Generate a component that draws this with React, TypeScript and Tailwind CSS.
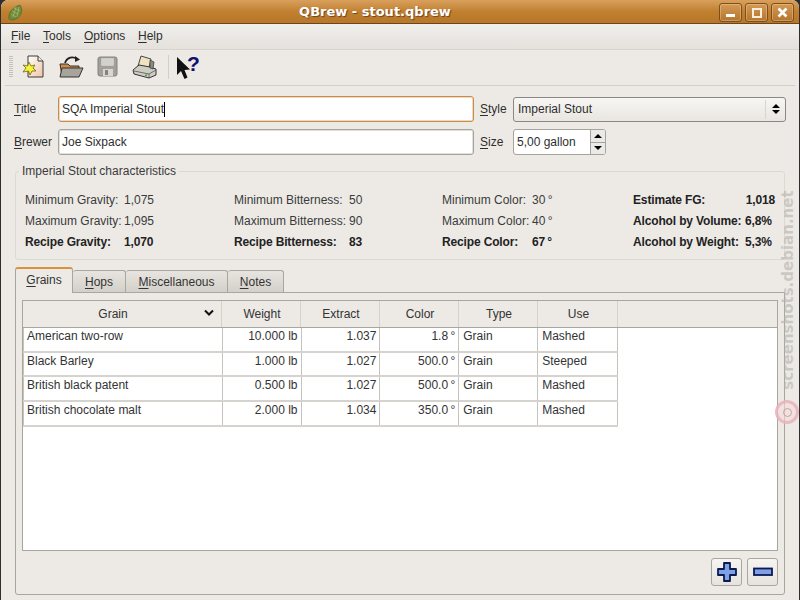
import type { ReactNode } from 'react';

const COLUMNS = [
  { label: 'Grain', width: 'w-[199px]' },
  { label: 'Weight', width: 'w-[79px]' },
  { label: 'Extract', width: 'w-[79px]' },
  { label: 'Color', width: 'w-[79px]' },
  { label: 'Type', width: 'w-[79px]' },
  { label: 'Use', width: 'w-[80px]' },
];

const GRAINS = [
  ['American two-row', '10.000 lb', '1.037', '1.8\u2009°', 'Grain', 'Mashed'],
  ['Black Barley', '1.000 lb', '1.027', '500.0\u2009°', 'Grain', 'Steeped'],
  ['British black patent', '0.500 lb', '1.027', '500.0\u2009°', 'Grain', 'Mashed'],
  ['British chocolate malt', '2.000 lb', '1.034', '350.0\u2009°', 'Grain', 'Mashed'],
];

const CHARACTERISTICS = [
  {
    width: 'w-[209px]',
    labelWidth: 'w-[99px]',
    rows: [
      ['Minimum Gravity:', '1,075'],
      ['Maximum Gravity:', '1,095'],
      ['Recipe Gravity:', '1,070'],
    ],
  },
  {
    width: 'w-[208px]',
    labelWidth: 'w-[115px]',
    rows: [
      ['Minimum Bitterness:', '50'],
      ['Maximum Bitterness:', '90'],
      ['Recipe Bitterness:', '83'],
    ],
  },
  {
    width: 'w-[191px]',
    labelWidth: 'w-[90px]',
    rows: [
      ['Minimum Color:', '30\u2009°'],
      ['Maximum Color:', '40\u2009°'],
      ['Recipe Color:', '67\u2009°'],
    ],
  },
];

function U({ children }: { children: ReactNode }) {
  return <span className="underline underline-offset-2">{children}</span>;
}

function WindowButton({ children }: { children: ReactNode }) {
  return (
    <div className="flex h-[19px] w-[23px] items-center justify-center rounded-[3px] border border-[#7d4f1c] bg-gradient-to-b from-[#d49a56] to-[#b5752c] shadow-[inset_0_0_0_1px_rgba(255,235,200,0.3)]">
      {children}
    </div>
  );
}

function TitleBar() {
  return (
    <div className="relative flex h-[24px] shrink-0 items-center justify-center rounded-t-[7px] border-b border-[#6b4520] bg-gradient-to-b from-[#d9a05c] via-[#c0802f] to-[#b87729] pr-[50px]">
      <svg className="absolute left-[7px] top-[4px]" width="16" height="17" viewBox="0 0 16 17">
        <path d="M12 1 C15 5 14 12 8 15 C5 16 3 16 1 15 C0 10 3 4 12 1Z" fill="#6f8a3c" stroke="#4f6a2a" strokeWidth="0.7" />
        <path d="M4 7 L10 10 M3 10 L8 13 M6 4 L12 7 M8 3 L5 13 M11 3 L9 13" stroke="#a5b96a" strokeWidth="0.8" />
      </svg>
      <span className="font-['DejaVu_Sans'] text-[13px] font-bold text-white [text-shadow:1px_1px_1px_#6b4520]">QBrew - stout.qbrew</span>
      <div className="absolute right-[5px] top-[3px] flex gap-[3px]">
        <WindowButton>
          <div className="mt-[6px] h-[3px] w-[9px] bg-white" />
        </WindowButton>
        <WindowButton>
          <div className="h-[10px] w-[10px] border-2 border-[#fbeedd]" />
        </WindowButton>
        <WindowButton>
          <svg width="11" height="11" viewBox="0 0 11 11">
            <path d="M1.5 1.5 L9.5 9.5 M9.5 1.5 L1.5 9.5" stroke="#fff" strokeWidth="2.6" />
          </svg>
        </WindowButton>
      </div>
    </div>
  );
}

function MenuBar() {
  return (
    <div className="flex h-[26px] shrink-0 items-center border-b border-[#d8d4cd] bg-gradient-to-b from-[#f1efec] to-[#e4e1dc] pb-[1px] pl-[10px] text-[12px] text-[#2e2e2e]">
      <span className="w-[32px]"><U>F</U>ile</span>
      <span className="w-[41px]"><U>T</U>ools</span>
      <span className="w-[54px]"><U>O</U>ptions</span>
      <span><U>H</U>elp</span>
    </div>
  );
}

function NewIcon() {
  return (
    <svg width="26" height="26" viewBox="0 0 26 26">
      <defs>
        <linearGradient id="pg" x1="0" y1="0" x2="1" y2="1">
          <stop offset="0" stopColor="#fff" />
          <stop offset="1" stopColor="#f0c4a4" />
        </linearGradient>
      </defs>
      <path d="M7 2 H17 L22 7 V23 H7Z" fill="url(#pg)" stroke="#3a3a3a" strokeWidth="1" />
      <path d="M17 2 V7 H22" fill="#eee" stroke="#3a3a3a" strokeWidth="1" />
      <path d="M8 8 L10 12 L14 11 L12 14 L15 17 L11 17 L9 21 L7.500 17 L2 18 L5 14 L2 11 L6.500 12Z" fill="#f8f23a" stroke="#6b6a10" strokeWidth="0.8" />
    </svg>
  );
}

function OpenIcon() {
  return (
    <svg width="26" height="26" viewBox="0 0 26 26">
      <path d="M2 10 H10 L12 12 H21 V22 H4Z" fill="#c98c52" stroke="#3d2c1c" strokeWidth="1" />
      <path d="M4 14 H25 L21 23 H2Z" fill="#a8a49b" stroke="#333" strokeWidth="1" />
      <path d="M7 9 C9 3 15 2 19 5" fill="none" stroke="#222" strokeWidth="1.800" />
      <path d="M17 2 L22 5.500 L17 8Z" fill="#222" />
    </svg>
  );
}

function SaveIcon() {
  return (
    <svg width="22" height="22" viewBox="0 0 22 22">
      <rect x="1" y="1" width="19" height="19" rx="2" fill="#a3a09a" stroke="#85827c" />
      <rect x="4" y="2" width="13" height="8" fill="#e4e2de" stroke="#9a9791" strokeWidth="0.600" />
      <path d="M5 4 H16 M5 6 H16 M5 8 H16" stroke="#b5b3ae" strokeWidth="0.700" />
      <rect x="6" y="13" width="10" height="7" fill="#d8d6d1" />
      <rect x="8" y="14" width="3" height="5" fill="#85827c" />
    </svg>
  );
}

function PrintIcon() {
  return (
    <svg width="26" height="26" viewBox="0 0 26 26">
      <path d="M9 2 L19 5 L17 14 L6 12Z" fill="#f0e2c0" stroke="#444" strokeWidth="1" />
      <path d="M1 16 L7 11 L18 13 L24 15 V21 L17 24 L2 20Z" fill="#cfccc6" stroke="#333" strokeWidth="1" />
      <path d="M2 17 L17 20 L24 16 M17 20 V24" fill="none" stroke="#555" strokeWidth="0.800" />
      <path d="M18 6 L22 8 L21 15 L18 14Z" fill="#8d8a84" stroke="#333" strokeWidth="0.700" />
      <rect x="13" y="20.500" width="2" height="1.500" fill="#2fae38" />
    </svg>
  );
}

function WhatsThisIcon() {
  return (
    <svg width="26" height="32" viewBox="0 -3 26 32">
      <path d="M1 3 L1 21 L5 17 L8.500 25 L11.500 23.500 L8.500 16 L14 15.500Z" fill="#111" />
      <text x="11" y="17" fontFamily="'Liberation Sans', sans-serif" fontWeight="700" fontSize="21" fill="#10106e">?</text>
    </svg>
  );
}

function ToolBar() {
  return (
    <div className="mx-[4px] flex h-[36px] shrink-0 items-center border-b border-[#d3cfc8] pb-[2px]">
      <div className="ml-[4px] h-[22px] w-[4px] bg-[repeating-linear-gradient(to_bottom,#c4c0b9_0,#c4c0b9_1px,transparent_1px,transparent_2px)]" />
      <div className="ml-[2px] flex w-[37px] justify-center"><NewIcon /></div>
      <div className="flex w-[37px] justify-center"><OpenIcon /></div>
      <div className="flex w-[37px] justify-center"><SaveIcon /></div>
      <div className="flex w-[38px] justify-center"><PrintIcon /></div>
      <div className="ml-[4px] h-[24px] w-px bg-[#d3cfc8]" />
      <div className="ml-[7px]"><WhatsThisIcon /></div>
    </div>
  );
}

function FormRows() {
  return (
    <div className="flex flex-col gap-[7px] px-[13px] pt-[10px] text-[12px] text-[#2e2e2e]">
      <div className="flex h-[26px] items-center">
        <span className="w-[44px]"><U>T</U>itle</span>
        <div className="flex h-[26px] w-[416px] items-center rounded-[3px] border border-[#c98b4a] bg-white px-[3px] shadow-[inset_0_0_0_1px_#f0d9be]">
          <span>SQA Imperial Stout</span>
          <div className="h-[15px] w-px bg-black" />
        </div>
        <span className="ml-[6px] w-[33px]"><U>S</U>tyle</span>
        <div className="flex h-[25px] w-[273px] items-center rounded-[3px] border border-[#8b8883] bg-gradient-to-b from-[#f7f6f4] to-[#e9e6e1] pl-[4px]">
          <span className="flex-1">Imperial Stout</span>
          <div className="flex h-[19px] w-[20px] flex-col items-center justify-center gap-[2px] border-l border-[#d8d5cf]">
            <div className="h-0 w-0 border-x-[4px] border-b-[4px] border-x-transparent border-b-black" />
            <div className="h-0 w-0 border-x-[4px] border-t-[4px] border-x-transparent border-t-black" />
          </div>
        </div>
      </div>
      <div className="flex h-[26px] items-center">
        <span className="w-[44px]"><U>B</U>rewer</span>
        <div className="flex h-[26px] w-[416px] items-center rounded-[3px] border border-[#a6a39d] bg-white px-[3px] shadow-[inset_0_0_0_1px_#e2e0dc]">
          Joe Sixpack
        </div>
        <span className="ml-[6px] w-[33px]"><U>S</U>ize</span>
        <div className="flex h-[26px] w-[93px] overflow-hidden rounded-[3px] border border-[#a6a39d] bg-white">
          <span className="flex flex-1 items-center pl-[3px]">5,00 gallon</span>
          <div className="flex w-[15px] flex-col border-l border-[#a6a39d] bg-[#eceae6]">
            <div className="flex flex-1 items-center justify-center border-b border-[#a6a39d]">
              <div className="h-0 w-0 border-x-[4px] border-b-[4px] border-x-transparent border-b-black" />
            </div>
            <div className="flex flex-1 items-center justify-center">
              <div className="h-0 w-0 border-x-[4px] border-t-[4px] border-x-transparent border-t-black" />
            </div>
          </div>
        </div>
      </div>
    </div>
  );
}

function Characteristics() {
  return (
    <div className="relative mx-[14px] mt-[16px] h-[89px] rounded-[3px] border border-[#dcd9d3] pl-[9px] pt-[17px] text-[12px] text-[#3a3a3a]">
      <span className="absolute left-[3px] top-[-8px] bg-[#edeae6] px-[3px] leading-[15px]">Imperial Stout characteristics</span>
      <div className="flex">
        {CHARACTERISTICS.map((col) => (
          <div key={col.labelWidth} className={`flex flex-col ${col.width}`}>
            {col.rows.map(([label, value], i) => (
              <div key={label} className={`flex h-[21px] items-center ${i === 2 ? 'font-bold tracking-[-0.15px] text-[#222]' : ''}`}>
                <span className={col.labelWidth}>{label}</span>
                <span>{value}</span>
              </div>
            ))}
          </div>
        ))}
        <div className="flex w-[142px] flex-col font-bold tracking-[-0.15px] text-[#222]">
          <div className="flex h-[21px] items-center justify-between"><span>Estimate FG:</span><span>1,018</span></div>
          <div className="flex h-[21px] items-center"><span className="w-[112px]">Alcohol by Volume:</span><span>6,8%</span></div>
          <div className="flex h-[21px] items-center"><span className="w-[112px]">Alcohol by Weight:</span><span>5,3%</span></div>
        </div>
      </div>
    </div>
  );
}

function Tabs() {
  return (
    <div className="relative z-10 ml-[14px] mt-[7px] flex h-[25px] items-end text-[12px] text-[#333]">
      <div className="z-10 mb-[-1px] flex h-[26px] w-[58px] items-center justify-center rounded-t-[3px] border-x border-[#a9a69f] border-t-[2px] border-t-[#d9913c] bg-[#edeae6] pb-[3px]">
        <U>G</U>rains
      </div>
      <div className="flex h-[22px] w-[53px] items-center justify-center rounded-t-[3px] border-r border-t border-[#a9a69f] bg-gradient-to-b from-[#e8e5e0] to-[#d3d0ca]"><span><U>H</U>ops</span></div>
      <div className="flex h-[22px] w-[102px] items-center justify-center rounded-t-[3px] border-r border-t border-[#a9a69f] bg-gradient-to-b from-[#e8e5e0] to-[#d3d0ca]"><span><U>M</U>iscellaneous</span></div>
      <div className="flex h-[22px] w-[56px] items-center justify-center rounded-t-[3px] border-r border-t border-[#a9a69f] bg-gradient-to-b from-[#e8e5e0] to-[#d3d0ca]"><span><U>N</U>otes</span></div>
    </div>
  );
}

function GrainTable() {
  return (
    <div className="mx-[6px] mt-[7px] h-[251px] border border-[#a9a69f] bg-white text-[12px] text-[#333]">
      <div className="flex h-[27px] border-b border-[#a9a69f] bg-[#edeae6]">
        {COLUMNS.map((col, i) => (
          <div key={col.label} className={`relative flex items-center justify-center border-r border-[#d5d2cc] ${col.width} ${i === 0 ? 'pr-[18px]' : 'pl-[2px]'}`}>
            {col.label}
            {i === 0 && (
              <svg className="absolute right-[7px] top-[8px]" width="10" height="8" viewBox="0 0 10 8">
                <path d="M1 1.500 L5 5.500 L9 1.500" fill="none" stroke="#111" strokeWidth="2" />
              </svg>
            )}
          </div>
        ))}
        <div className="flex-1" />
      </div>
      {GRAINS.map((row) => (
        <div key={row[0]} className="flex h-[24.700px] w-[595px] border-b-2 border-[#d6d3ce]">
          {row.map((cell, i) => (
            <div
              key={i}
              className={`h-full overflow-hidden border-l border-[#c6c3bd] pr-[3px] pt-[1px] leading-[15px] ${COLUMNS[i].width} ${i > 0 && i < 4 ? 'text-right' : ''} ${i >= 4 ? 'pl-[4px]' : 'pl-[3px]'}`}
            >
              {cell}
            </div>
          ))}
          <div className="w-0 border-r border-[#c6c3bd]" />
        </div>
      ))}
    </div>
  );
}

function ActionButton({ children }: { children: ReactNode }) {
  return (
    <div className="flex h-[28px] w-[31px] items-center justify-center rounded-[3px] border border-[#a9a69f] bg-gradient-to-b from-[#f6f5f2] to-[#e6e3de]">
      {children}
    </div>
  );
}

function TabPanel() {
  return (
    <div className="mx-[14px] flex h-[303px] flex-col rounded-b-[3px] border border-[#a9a69f]">
      <GrainTable />
      <div className="mr-[6px] mt-[7px] flex justify-end gap-[5px]">
        <ActionButton>
          <svg width="20" height="20" viewBox="0 0 20 20">
            <path d="M7 1 H13 V7 H19 V13 H13 V19 H7 V13 H1 V7 H7Z" fill="#7f9fe6" stroke="#0b1b50" strokeWidth="1.800" strokeLinejoin="round" />
          </svg>
        </ActionButton>
        <ActionButton>
          <svg width="20" height="10" viewBox="0 0 20 10">
            <rect x="1" y="1.500" width="18" height="6.500" fill="#7f9fe6" stroke="#0b1b50" strokeWidth="1.800" />
          </svg>
        </ActionButton>
      </div>
    </div>
  );
}

function Watermark() {
  return (
    <>
      <div className="absolute left-[788px] top-[290px] -translate-x-1/2 -translate-y-1/2 -rotate-90 whitespace-nowrap font-['DejaVu_Sans'] text-[15px] font-bold text-[#b5b2ac]/60">
        screenshots.debian.net
      </div>
      <div className="absolute left-[775px] top-[400px] flex h-[24px] w-[24px] items-center justify-center rounded-full border-[3px] border-[#e8a9b4]/70 bg-[#f3dcdc]/60">
        <div className="h-[9px] w-[9px] rounded-full border border-[#c9a0a5]" />
      </div>
    </>
  );
}

export default function App() {
  return (
    <div className="relative h-[600px] w-[800px] overflow-hidden bg-[#2e2e2e] font-['Liberation_Sans',sans-serif]">
      <div className="mx-[1px] flex h-[600px] flex-col overflow-hidden rounded-t-[7px] bg-[#edeae6]">
        <TitleBar />
        <MenuBar />
        <ToolBar />
        <FormRows />
        <Characteristics />
        <Tabs />
        <TabPanel />
      </div>
      <Watermark />
    </div>
  );
}
